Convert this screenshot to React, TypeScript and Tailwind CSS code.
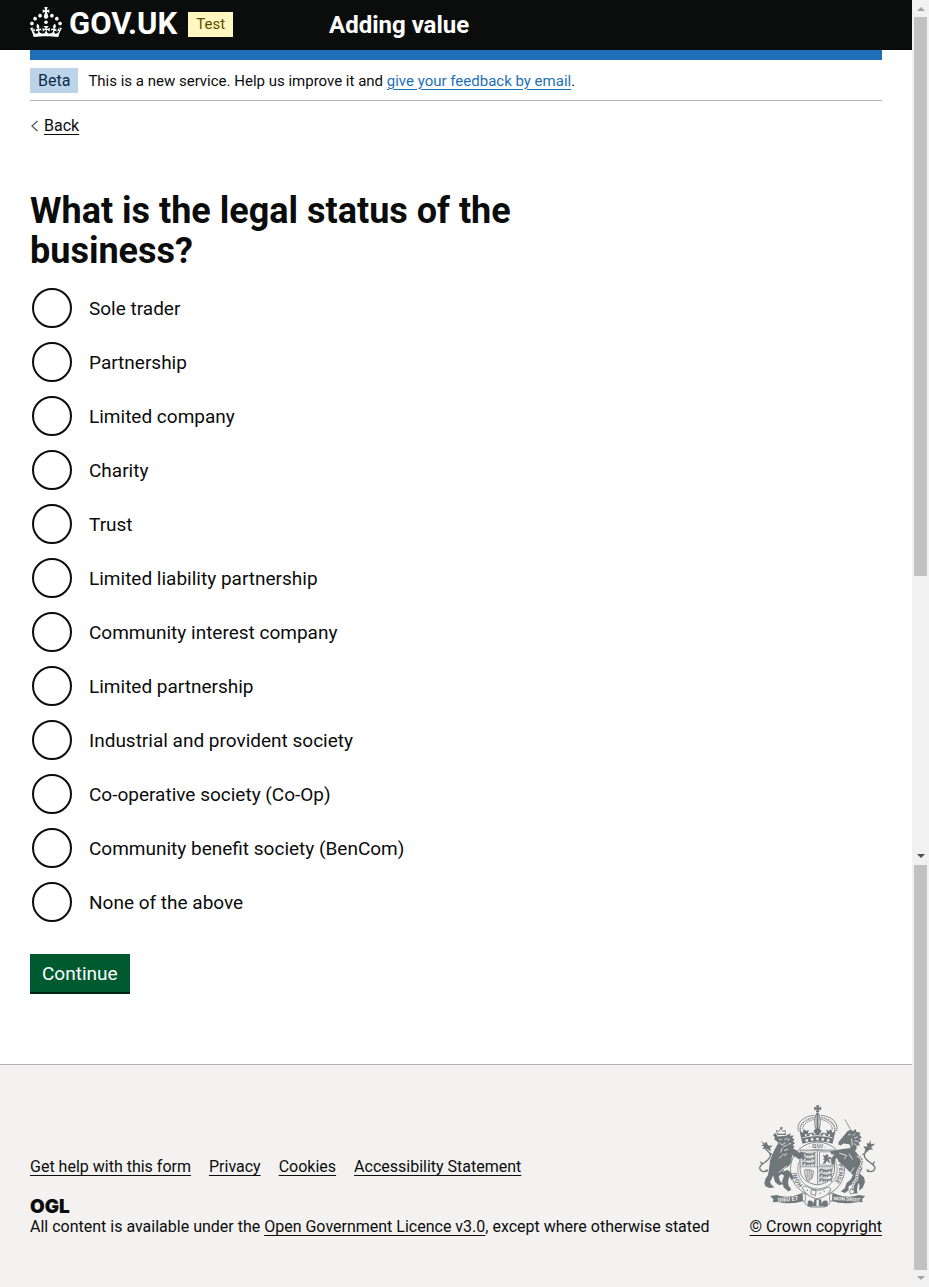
import type { ReactNode } from "react";

const statuses = [
  "Sole trader",
  "Partnership",
  "Limited company",
  "Charity",
  "Trust",
  "Limited liability partnership",
  "Community interest company",
  "Limited partnership",
  "Industrial and provident society",
  "Co-operative society (Co-Op)",
  "Community benefit society (BenCom)",
  "None of the above",
];

const footerLinks = ["Get help with this form", "Privacy", "Cookies", "Accessibility Statement"];

function TextLink({ children, blue = false }: { children: ReactNode; blue?: boolean }) {
  return (
    <a
      href="#"
      className={`underline decoration-1 underline-offset-3 ${blue ? "text-[#1d70b8]" : "text-[#0b0c0c]"}`}
    >
      {children}
    </a>
  );
}

function CrownIcon() {
  return (
    <svg viewBox="0 0 32 30" className="h-[30px] w-8 shrink-0 fill-current" aria-hidden="true">
      <path d="M22.6 10.4c-1 .4-2-.1-2.4-1-.4-.9.1-2 1-2.4.9-.4 2 .1 2.4 1s-.1 2-1 2.4m4.9 3c-1 .4-2-.1-2.4-1-.4-.9.1-2 1-2.4.9-.4 2 .1 2.4 1s0 2-1 2.4m3.3 4.8c-1 .4-2-.1-2.4-1-.4-.9.1-2 1-2.4.9-.4 2 .1 2.4 1s-.1 2-1 2.4M17 4.7l2.3 1.2V2.5l-2.3.7-.2-.2.9-3h-3.4l.9 3-.2.2c-.1.1-2.3-.7-2.3-.7v3.4L15 4.7c.1.1.1.2.2.2l-1.3 4c-.1.2-.1.4-.1.6 0 1.1.8 2 1.9 2.2h.7c1-.2 1.9-1.1 1.9-2.1 0-.2 0-.4-.1-.6l-1.3-4c-.1-.2 0-.2.1-.3m-7.6 5.7c.9.4 2-.1 2.4-1 .4-.9-.1-2-1-2.4-.9-.4-2 .1-2.4 1s0 2 1 2.4m-5 3c.9.4 2-.1 2.4-1 .4-.9-.1-2-1-2.4-.9-.4-2 .1-2.4 1s.1 2 1 2.4m-3.2 4.8c.9.4 2-.1 2.4-1 .4-.9-.1-2-1-2.4-.9-.4-2 .1-2.4 1s0 2 1 2.4m14.8 11c4.4 0 8.6.3 12.3.8 1.1-4.5 2.4-7 3.7-8.8l-2.5-.9c.2 1.3.3 1.9 0 2.7-.4-.4-.8-1.1-1.1-2.3l-1.2 4c.7-.5 1.3-.8 2-.9-1.1 2.5-2.6 3.1-3.5 3-1.1-.2-1.7-1.2-1.5-2.1.3-1.2 1.5-1.5 2.1-.1 1.1-2.3-.8-3-2-2.3 1.9-1.9 2.1-3.5.6-5.6-2.1 1.6-2.1 3.2-1.2 5.5-1.2-1.4-3.2-.6-2.5 1.6.9-1.4 2.1-.5 1.9.8-.2 1.1-1.7 2.1-3.5 1.9-2.7-.2-2.9-2.1-2.9-3.6.7-.1 1.9.5 2.9 1.9l.4-4.3c-1.1 1.1-2.1 1.4-3.2 1.4.4-1.2 2.1-3 2.1-3h-5.4s1.7 1.9 2.1 3c-1.1 0-2.1-.2-3.2-1.4l.4 4.3c1-1.4 2.2-2 2.9-1.9-.1 1.5-.2 3.4-2.9 3.6-1.9.2-3.4-.8-3.5-1.9-.2-1.3 1-2.2 1.9-.8.7-2.3-1.2-3-2.5-1.6.9-2.2.9-3.9-1.2-5.5-1.5 2-1.3 3.7.6 5.6-1.2-.7-3.1 0-2 2.3.6-1.4 1.8-1.1 2.1.1.2.9-.3 1.9-1.5 2.1-.9.2-2.4-.5-3.5-3 .6 0 1.2.3 2 .9l-1.2-4c-.3 1.1-.7 1.9-1.1 2.3-.3-.8-.2-1.4 0-2.7l-2.9.9C1.3 23 2.6 25.5 3.7 30c3.7-.5 7.9-.8 12.3-.8" />
      <circle cx="16" cy="15.2" r="1.8" />
    </svg>
  );
}

function ThreeLions() {
  return (
    <g fill="none" stroke="#6f777b" strokeWidth="3.5">
      {[7, 21, 35].map((y) => (
        <path
          key={y}
          d={`M4 ${y + 1}l5-3 6 3 10 1 10-1 8-4M8 ${y + 1}l-4 6M16 ${y + 2}l-2 6M19 ${y + 2}l3 5M30 ${y + 1}l-3 6M36 ${y}l5 7`}
        />
      ))}
    </g>
  );
}

function RoyalArms() {
  return (
    <svg viewBox="57 44 350 308" className="mr-1.5 h-[103px] w-[117px]" aria-hidden="true">
      <defs>
        <path id="garter" d="M232 300A64 64 0 0 1 232 172A64 64 0 0 1 232 300" />
      </defs>
      <g fill="#6f777b" stroke="none">
        {/* crown */}
        <path d="M227 45h11l-3 7 8-3v11l-8-3 3 8h-11l3-8-8 3V49l8 3z" />
        <path d="M175 122c-8-26 18-46 47-47M289 122c8-26-18-46-47-47" fill="none" stroke="#6f777b" strokeWidth="2.5" />
        <path
          d="M181 122c-5-21 18-38 43-41M283 122c5-21-18-38-43-41"
          fill="none"
          stroke="#6f777b"
          strokeWidth="4"
          strokeDasharray="4 2.5"
        />
        <path d="M188 118c-2-16 17-29 36-31M276 118c2-16-17-29-36-31" fill="none" stroke="#6f777b" strokeWidth="2" />
        <ellipse cx="232" cy="94" rx="8" ry="24" fill="#f3f2f1" stroke="#6f777b" strokeWidth="3" />
        <path d="M229 66h6v50h-6z" />
        <path d="M178 121l10 6 3-11 7 6 8-4-3 11 13-3 7 5-3-11 12-8 12 8-3 11 7-5 13 3-3-11 8 4 7-6 3 11 10-6-9 39c-28-9-61-9-90 0z" />
        <path d="M187 142q45-13 90 0" fill="none" stroke="#f3f2f1" strokeWidth="2.5" />
        <g fill="#f3f2f1">
          <circle cx="197" cy="134" r="3" />
          <circle cx="212" cy="134" r="4" />
          <circle cx="252" cy="134" r="4" />
          <circle cx="267" cy="134" r="3" />
          <circle cx="224" cy="130" r="2.5" />
          <circle cx="240" cy="130" r="2.5" />
          <circle cx="200" cy="150" r="4" />
          <circle cx="216" cy="147" r="4" />
          <circle cx="232" cy="146" r="4" />
          <circle cx="248" cy="147" r="4" />
          <circle cx="264" cy="150" r="4" />
        </g>
        {/* garter */}
        <circle cx="232" cy="236" r="81" fill="#f3f2f1" stroke="#6f777b" strokeWidth="2.5" />
        <circle cx="232" cy="236" r="59" fill="none" stroke="#6f777b" strokeWidth="2" />
        <g className="font-[Roboto] text-[18px] font-bold">
          <text>
            <textPath href="#garter" startOffset="48">HONI</textPath>
          </text>
          <text>
            <textPath href="#garter" startOffset="176">· QUI ·</textPath>
          </text>
          <text>
            <textPath href="#garter" startOffset="286">PENSE</textPath>
          </text>
        </g>
        {/* shield */}
        <path
          d="M180 179h103v58c0 24-20 42-51 46-32-4-52-22-52-46z"
          fill="#f3f2f1"
          stroke="#6f777b"
          strokeWidth="2.5"
        />
        <g transform="translate(183 182)">
          <rect width="47" height="44" opacity=".2" />
          <ThreeLions />
        </g>
        <g transform="translate(234 231)">
          <path d="M0 0h46q0 32-46 50z" opacity=".2" />
          <ThreeLions />
        </g>
        <path d="M238 184h41v40h-41z" fill="none" stroke="#6f777b" strokeWidth="2" />
        <path d="M248 192l6 4 6-5 6 4-4 7 9-3 3 4-9 5 7 8-5 1-7-6-4 8-9 1 6-9-6-7 6 2z" />
        <path d="M232 179v102M181 229h101" fill="none" stroke="#6f777b" strokeWidth="3" opacity=".7" />
        <path
          d="M194 238q16-3 26 4l-4 20-12 10q-12-14-10-34zM201 239v25M207 239v29M213 240v24"
          fill="none"
          stroke="#6f777b"
          strokeWidth="2.5"
        />
        {/* belt and feet */}
        <path d="M203 331c9-5 18 2 18 10 0 9-13 9-19 3zM262 331c-9-5-18 2-18 10 0 9 13 9 19 3zM222 326h21l2 21h-25z" />
        <path d="M229 328h7v18h-7z" fill="#f3f2f1" />
        <path
          d="M186 291c8-8 17-3 28 3 12 6 31 7 42-1 8-6 17-2 15 5-7 18-28 24-40 26-18-2-34-12-45-33z"
          fill="#f3f2f1"
          stroke="#6f777b"
          strokeWidth="2.5"
        />
        <path d="M214 297l14 3-2 15-14-5z" fill="none" stroke="#6f777b" strokeWidth="2.5" />
        <circle cx="240" cy="308" r="2" />
        <circle cx="252" cy="303" r="2" />
        <circle cx="202" cy="299" r="2" />
        <path d="M193 332q4 16 21 17h36q17-1 20-17" fill="none" stroke="#6f777b" strokeWidth="2.5" />
        {/* lion */}
        <path d="M112 132l-3-12 7 3 6-9 6 9 8-3-1 12z" fill="none" stroke="#6f777b" strokeWidth="2.5" />
        <path d="M121 110h6v6h-6zM111 130h27v4h-27z" />
        <path d="M113 138l25-2 13-8-1 8 11-1-5 8 8 4-6 5 7 7-7 3 5 8-5 5 9 3 10 9 9-3 7 5-5 3 6 5-6 3 2 5-9-2-5 4-7-6-13-7-2 16c-2 12-9 19-21 24l-6 13-11 11 4 14 12 9-16 2-11-9-6-20-3 9-6 11 4 8 9 9-15 1-12-5-3-8 3-14 8-12 3-18 3-25 7-19 10-20 8-14-7-6-5-3 1-8-5-5 6-8z" />
        <path d="M120 248l22-10 12 10 8 14-8 6-6-10-4 13 1 13 9 13-9 6-14-12-5-19 6-17z" />
        <path
          d="M117 147l8 1m8-1l9-3m-24 13l8 6 11-7m-8 12l12-4m3 12l-12 4m9 10l-9 5M131 190l-14 14M148 144l-5 8M153 158l-9 4M127 172l-5 14M140 226l-24 20"
          fill="none"
          stroke="#f3f2f1"
          strokeWidth="2.5"
        />
        <path d="M82 241c-14 5-23 0-23-9 0-13 31-19 32-37 1-13-15-12-15-25" fill="none" stroke="#6f777b" strokeWidth="4" />
        <path d="M62 151l12 8 5-6 5 12 15 1-9 6 3 11-14-9-12 2 5-8-9-4 8-2zM89 186l9 5-8 5zM68 216l-9-4 7 12zM75 238l5 7 5-8z" />
        {/* unicorn */}
        <path d="M314 87l19 34" fill="none" stroke="#6f777b" strokeWidth="2.5" strokeDasharray="7 1" />
        <path d="M322 122l9-3 9 3 5-7 4 10 12 2-4 7 8 7-7 3 5 9-8 2 3 11-8-1-2 12-9 9-14-5 6-13-4-7-18-2-7 6-8-3 2-9 14-16z" />
        <path
          d="M324 133l7-1M345 129l-7 7M353 139l-11 4M355 153l-12-2M350 167l-10-9M334 144l2 22"
          fill="none"
          stroke="#f3f2f1"
          strokeWidth="2.5"
        />
        <path d="M302 176l24-3 16 6 15 16 8 19 1 21-8 14 13 11 3 14-7 18-11 8 2-16-10-15-10 11-13 7 0 12-11 8-12-4 12-11 5-15 13-11 6-13-15-14-14-15-14-10-5-12-7 8-2 13-7-2-2-16 14-14-13 0-3-8 12-3z" />
        <path d="M346 262l8 14-4 21 2 12h-16l5-9-6-14 3-17z" />
        <path d="M297 188l22 7-7 11M326 190l11 17M342 230l-12 18" fill="none" stroke="#f3f2f1" strokeWidth="2.5" />
        <path d="M350 195c14 4 20 15 12 31-9 14-14 23-12 39l-10 12-5 18" fill="none" stroke="#f3f2f1" strokeWidth="8" />
        <path
          d="M350 195c14 4 20 15 12 31-9 14-14 23-12 39l-10 12-5 18"
          fill="none"
          stroke="#6f777b"
          strokeWidth="4"
          strokeDasharray="5 3"
        />
        <circle cx="335" cy="303" r="7" fill="#f3f2f1" stroke="#6f777b" strokeWidth="2.5" />
        <path d="M380 241c15 5 24 0 24-9 0-13-31-19-32-37-1-13 15-12 15-25" fill="none" stroke="#6f777b" strokeWidth="4" />
        <path d="M390 149l-4 11-7-3 2 12-12-2 6 9-3 10 12-8 15-1-7-6 13-12-13 2zM374 186l-9 5 8 5zM397 216l8-4-6 12zM388 238l-5 7-6-8z" />
        {/* motto ribbon */}
        <path d="M90 316l19-3 15 4c18 3 36 1 62-10l6 5-4 20c-24 7-45 8-78 2l-12 1 2-9zM375 316l-19-3-15 4c-18 3-36 1-63-10l-6 5 4 20c24 7 46 8 79 2l12 1-2-9z" />
        <path d="M186 307l10 5v18l-8 2zM278 307l-10 5v18l8 2z" fill="#f3f2f1" stroke="#6f777b" strokeWidth="2" />
        <g className="fill-[#f3f2f1] font-[Roboto] text-[17px] font-bold">
          <text transform="translate(114 334) rotate(-5)">DIEU ET</text>
          <text className="text-[15px]" transform="translate(280 328) rotate(4)">
            MON DROIT
          </text>
        </g>
      </g>
    </svg>
  );
}

function ScrollArrow({ down = false, dark = false }: { down?: boolean; dark?: boolean }) {
  return (
    <span className="flex h-4 shrink-0 items-center justify-center">
      <svg viewBox="0 0 8 4" className={`h-1 w-2 ${dark ? "fill-[#505050]" : "fill-[#a3a3a3]"}`}>
        <path d={down ? "M0 0h8L4 4z" : "M0 4h8L4 0z"} />
      </svg>
    </span>
  );
}

export default function App() {
  return (
    <div className="flex min-h-screen font-[Roboto,sans-serif] text-base leading-5 text-[#0b0c0c]">
      <div className="flex min-w-0 flex-1 flex-col">
        <header className="bg-[#0b0c0c] text-white">
          <div className="grid h-[50px] grid-cols-[299px_1fr] items-center px-[30px]">
            <div className="flex items-center gap-[11px] pb-0.5">
              <a href="#" className="flex items-center gap-[7px]">
                <span className="pb-1">
                  <CrownIcon />
                </span>
                <span className="text-[31px] leading-8 font-bold">GOV.UK</span>
              </a>
              <strong className="bg-[#fff7bf] px-2 py-[3px] text-[15px] leading-[19px] font-normal text-[#594d00]">
                Test
              </strong>
            </div>
            <a href="#" className="text-2xl font-bold">
              Adding value
            </a>
          </div>
        </header>

        <div className="px-[30px]">
          <div className="h-2.5 bg-[#1d70b8]" />
          <div className="flex items-center gap-2.5 border-b border-[#b1b4b6] pt-2 pb-[7px]">
            <strong className="bg-[#bbd4ea] px-2 py-[3px] leading-[19px] font-normal text-[#0c2d4a]">Beta</strong>
            <span className="text-[15px]">
              This is a new service. Help us improve it and <TextLink blue>give your feedback by email</TextLink>.
            </span>
          </div>
          <div className="mt-[15px] flex items-center gap-1">
            <svg viewBox="0 0 10 12" className="h-3 w-2.5 fill-none stroke-[#505a5f]" aria-hidden="true">
              <path d="M7.5 1L2 6l5.5 5" strokeWidth="1.3" />
            </svg>
            <TextLink>Back</TextLink>
          </div>
        </div>

        <main className="flex-1 px-[30px] pt-[55px] pb-[70px]">
          <form onSubmit={(e) => e.preventDefault()}>
            <fieldset>
              <legend className="max-w-[560px]">
                <h1 className="text-4xl leading-10 font-bold">
                  What is the legal status of the
                  <br />
                  business?
                </h1>
              </legend>
              <div className="mt-[17px] flex flex-col gap-3.5 pl-0.5">
                {statuses.map((status) => (
                  <label key={status} className="flex items-center gap-[17px] text-[19px] leading-6">
                    <input
                      type="radio"
                      name="legal-status"
                      className="size-10 shrink-0 appearance-none rounded-full border-2 border-[#0b0c0c] bg-white checked:border-[12px]"
                    />
                    <span className="pt-0.5">{status}</span>
                  </label>
                ))}
              </div>
            </fieldset>
            <button
              type="submit"
              className="mt-8 border-b-2 border-[#002413] bg-[#005a30] px-3 pt-2 pb-1.5 text-[19px] leading-6 text-white"
            >
              Continue
            </button>
          </form>
        </main>

        <footer className="flex items-end justify-between gap-8 border-t border-[#b1b4b6] bg-[#f3f2f1] px-[30px] pt-10 pb-[50px]">
          <div>
            <ul className="flex flex-wrap gap-x-[18px] gap-y-2">
              {footerLinks.map((link) => (
                <li key={link}>
                  <TextLink>{link}</TextLink>
                </li>
              ))}
            </ul>
            <div className="mt-5 font-[Inter] text-[19px] leading-5 font-black">OGL</div>
            <p>
              All content is available under the <TextLink>Open Government Licence v3.0</TextLink>, except where
              otherwise stated
            </p>
          </div>
          <div className="flex shrink-0 flex-col items-end gap-[9px]">
            <RoyalArms />
            <TextLink>© Crown copyright</TextLink>
          </div>
        </footer>
      </div>

      <div className="flex w-[17px] shrink-0 flex-col bg-[#f1f1f1]" aria-hidden="true">
        <div className="pt-px">
          <ScrollArrow />
        </div>
        <div className="mx-0.5 h-[559px] bg-[#c1c1c1]" />
        <div className="h-[272px]" />
        <div className="pb-px">
          <ScrollArrow down dark />
        </div>
        <div className="mx-0.5 flex-1 bg-[#c1c1c1]" />
        <div className="pb-px">
          <ScrollArrow down />
        </div>
      </div>
    </div>
  );
}
